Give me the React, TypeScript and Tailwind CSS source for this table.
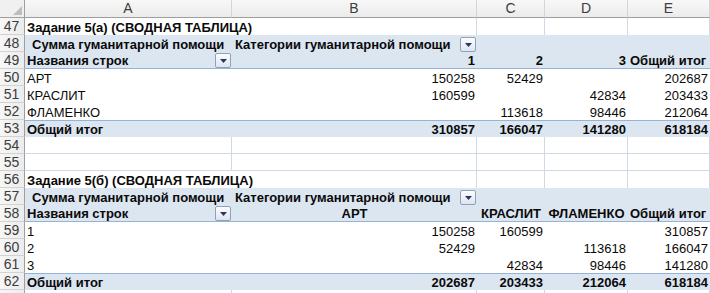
import React from "react";

type Cell = {
  t?: string;
  a?: "l" | "r" | "c";
  b?: boolean;
  btn?: boolean;
  pl?: string;
  br?: boolean;
};

const GRID = "grid grid-cols-[25px_207px_245px_68px_83px_82px]";

function DropBtn() {
  return (
    <div className="absolute right-[1px] bottom-0 w-[16px] h-[15px] rounded-[2px] border border-[#8fa2bd] bg-gradient-to-b from-[#fdfdfe] to-[#dfe5ee] flex items-center justify-center">
      <svg width="7" height="4" viewBox="0 0 7 4">
        <path d="M0 0 H7 L3.5 4 Z" fill="#25396a" />
      </svg>
    </div>
  );
}

function RowNum({ n }: { n?: number }) {
  return (
    <div className="h-full bg-gradient-to-r from-[#f7f7f7] to-[#ececec] border-r border-r-[#9e9e9e] border-b border-b-[#d2d2d2] flex items-end justify-center pr-[1px] text-[14px] leading-[15px] text-[#3c3c3c]">
      {n}
    </div>
  );
}

function Row({
  n,
  cells,
  kind,
}: {
  n?: number;
  cells: Cell[];
  kind: "white" | "blue" | "blueHead" | "blueTotal" | "grid" | "body";
}) {
  let rowCls = "bg-white";
  if (kind === "blue") rowCls = "bg-[#dce6f1]";
  if (kind === "blueHead") rowCls = "bg-[#dce6f1] border-b border-b-[#95b3d7]";
  if (kind === "blueTotal") rowCls = "bg-[#dce6f1] border-t border-t-[#95b3d7]";
  if (kind === "grid") rowCls = "bg-white border-b border-b-[#d0d7e5]";
  return (
    <div className={`${GRID} h-[17px]`}>
      <RowNum n={n} />
      <div className={`col-span-5 grid grid-cols-[207px_245px_68px_83px_82px] ${rowCls}`}>
        {cells.map((c, i) => (
          <div
            key={i}
            className={`relative h-full min-w-0 flex items-end whitespace-nowrap text-[13px] leading-[14px] text-[#0a0a0a] ${
              c.a === "r" ? "justify-end pr-[2px]" : c.a === "c" ? "justify-center" : "justify-start"
            } ${c.pl ?? "pl-[2px]"} ${c.b ? "font-bold" : ""} ${c.br ? "border-r border-r-[#d0d7e5]" : ""} ${
              i === 0 ? "overflow-visible z-10" : "overflow-hidden"
            }`}
          >
            {c.t && <span>{c.t}</span>}
            {c.btn && <DropBtn />}
          </div>
        ))}
      </div>
    </div>
  );
}

const e = (br = false): Cell => ({ br });

export default function App() {
  const gridEmpty: Cell[] = [e(true), e(true), e(true), e(true), e(true)];
  return (
    <div
      className="w-[710px] h-[293px] overflow-hidden bg-white"
      style={{ fontFamily: '"Liberation Sans", Arial, sans-serif' }}
    >
      {/* column header */}
      <div className={`${GRID} h-[18px]`}>
        <div className="relative h-full bg-[#f0f0f0] border-r border-r-[#9e9e9e] border-b border-b-[#9e9e9e]">
          <svg className="absolute right-[2px] bottom-[2px]" width="9" height="9" viewBox="0 0 9 9">
            <path d="M9 0 V9 H0 Z" fill="#bdbdbd" />
          </svg>
        </div>
        {["A", "B", "C", "D", "E"].map((l) => (
          <div
            key={l}
            className="h-full bg-gradient-to-b from-[#f8f8f8] to-[#ebebeb] border-r border-r-[#d5d5d5] border-b border-b-[#9e9e9e] flex items-center justify-center text-[14px] leading-[15px] text-[#3c3c3c]"
          >
            {l}
          </div>
        ))}
      </div>

      <Row
        n={47}
        kind="white"
        cells={[{ t: "Задание 5(а) (СВОДНАЯ ТАБЛИЦА)", b: true }, e(true), e(true), e(true), e(true)]}
      />
      <Row
        n={48}
        kind="blue"
        cells={[
          { t: "Сумма гуманитарной помощи", b: true, pl: "pl-[7px]" },
          { t: "Категории гуманитарной помощи", b: true, pl: "pl-[3px]", btn: true },
          {},
          {},
          {},
        ]}
      />
      <Row
        n={49}
        kind="blueHead"
        cells={[
          { t: "Названия строк", b: true, btn: true },
          { t: "1", b: true, a: "r" },
          { t: "2", b: true, a: "r" },
          { t: "3", b: true, a: "r" },
          { t: "Общий итог", b: true },
        ]}
      />
      <Row
        n={50}
        kind="body"
        cells={[{ t: "АРТ" }, { t: "150258", a: "r" }, { t: "52429", a: "r" }, {}, { t: "202687", a: "r" }]}
      />
      <Row
        n={51}
        kind="body"
        cells={[{ t: "КРАСЛИТ" }, { t: "160599", a: "r" }, {}, { t: "42834", a: "r" }, { t: "203433", a: "r" }]}
      />
      <Row
        n={52}
        kind="body"
        cells={[{ t: "ФЛАМЕНКО" }, {}, { t: "113618", a: "r" }, { t: "98446", a: "r" }, { t: "212064", a: "r" }]}
      />
      <Row
        n={53}
        kind="blueTotal"
        cells={[
          { t: "Общий итог", b: true },
          { t: "310857", b: true, a: "r" },
          { t: "166047", b: true, a: "r" },
          { t: "141280", b: true, a: "r" },
          { t: "618184", b: true, a: "r" },
        ]}
      />
      <Row n={54} kind="grid" cells={gridEmpty} />
      <Row n={55} kind="grid" cells={gridEmpty} />
      <Row
        n={56}
        kind="white"
        cells={[{ t: "Задание 5(б) (СВОДНАЯ ТАБЛИЦА)", b: true }, e(true), e(true), e(true), e(true)]}
      />
      <Row
        n={57}
        kind="blue"
        cells={[
          { t: "Сумма гуманитарной помощи", b: true, pl: "pl-[7px]" },
          { t: "Категории гуманитарной помощи", b: true, pl: "pl-[3px]", btn: true },
          {},
          {},
          {},
        ]}
      />
      <Row
        n={58}
        kind="blueHead"
        cells={[
          { t: "Названия строк", b: true, btn: true },
          { t: "АРТ", b: true, a: "c", pl: "pl-0" },
          { t: "КРАСЛИТ", b: true, a: "c", pl: "pl-0" },
          { t: "ФЛАМЕНКО", b: true, a: "c", pl: "pl-0" },
          { t: "Общий итог", b: true },
        ]}
      />
      <Row
        n={59}
        kind="body"
        cells={[{ t: "1" }, { t: "150258", a: "r" }, { t: "160599", a: "r" }, {}, { t: "310857", a: "r" }]}
      />
      <Row
        n={60}
        kind="body"
        cells={[{ t: "2" }, { t: "52429", a: "r" }, {}, { t: "113618", a: "r" }, { t: "166047", a: "r" }]}
      />
      <Row
        n={61}
        kind="body"
        cells={[{ t: "3" }, {}, { t: "42834", a: "r" }, { t: "98446", a: "r" }, { t: "141280", a: "r" }]}
      />
      <Row
        n={62}
        kind="blueTotal"
        cells={[
          { t: "Общий итог", b: true },
          { t: "202687", b: true, a: "r" },
          { t: "203433", b: true, a: "r" },
          { t: "212064", b: true, a: "r" },
          { t: "618184", b: true, a: "r" },
        ]}
      />
      <Row kind="grid" cells={gridEmpty} />
    </div>
  );
}
